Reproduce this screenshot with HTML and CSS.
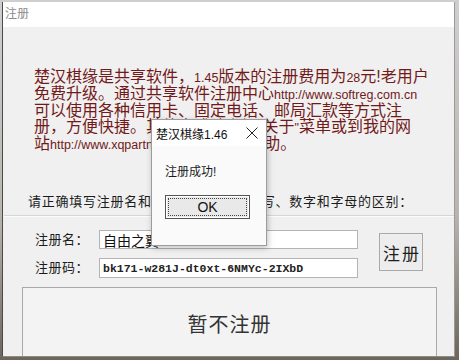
FILE: index.html
```html
<!doctype html>
<html lang="zh-CN">
<head>
    <meta charset="UTF-8">
    <title>注册</title>
    <link rel="stylesheet" href="styles.css">
</head>
<body>
    <div class="screen">
        <div class="win">
            <div class="win-title">注册</div>
            <div class="win-body">
                <div class="notice">
                    <div>楚汉棋缘是共享软件，<span class="lat">1.45</span>版本的注册费用为<span class="lat">28</span>元!老用户</div>
                    <div>免费升级。通过共享软件注册中心<span class="lat">http://www.softreg.com.cn</span></div>
                    <div>可以使用各种信用卡、固定电话、邮局汇款等方式注</div>
                    <div>册，方便快捷。其他方式请参阅<span class="lat">"</span>关于<span class="lat">"</span>菜单或到我的网</div>
                    <div>站<span class="lat">http://www.xqpartner.net</span>获取更多帮助。</div>
                </div>
                <div class="hint">请正确填写注册名和注册码，注意大小写、数字和字母的区别：</div>
                <div class="sep"></div>
                <div class="form">
                    <label class="lbl">注册名：</label>
                    <input class="field" type="text" value="自由之翼" readonly>
                    <label class="lbl">注册码：</label>
                    <input class="field code" type="text" value="bk171-w281J-dt0xt-6NMYc-2IXbD" readonly>
                    <button class="btn reg">注册</button>
                </div>
                <button class="btn later">暂不注册</button>
            </div>
        </div>

        <div class="msgbox">
            <div class="msg-title">
                <span>楚汉棋缘1.46</span>
                <svg class="msg-close" width="12" height="12" viewBox="0 0 12 12">
                    <path d="M0.5 0.5L11.5 11.5M11.5 0.5L0.5 11.5" stroke="#222" stroke-width="1" fill="none"/>
                </svg>
            </div>
            <div class="msg-text">注册成功!</div>
            <button class="ok"><span class="ok-in">OK</span></button>
        </div>
    </div>
</body>
</html>
```

FILE: styles.css
```css
*{
    margin: 0;
    padding: 0;
    box-sizing: border-box;
}
html,body{
    width: 459px;
    height: 360px;
    overflow: hidden;
}
body{
    background: linear-gradient(#cfcfcf, #b9b5ae 60%, #6d655b);
    font-family: "Liberation Sans", "Noto Sans CJK SC", sans-serif;
}
.screen{
    position: relative;
    width: 459px;
    height: 360px;
    padding: 2px 0 0 2px;
}
.win{
    width: 453px;
    height: 355px;
    background: #f0f0f0;
    border-left: 1px solid #4a4a4a;
    border-right: 1px solid #9a9a9a;
    border-bottom: 1px solid #8a8a8a;
    display: flex;
    flex-direction: column;
    overflow: hidden;
}
.win-title{
    height: 25px;
    line-height: 25px;
    background: #fff;
    color: #8c8c8c;
    font-size: 12px;
    padding-left: 2px;
    flex: none;
}
.win-body{
    flex: 1;
    display: flex;
    flex-direction: column;
    align-items: flex-start;
}
.notice{
    margin-top: 42px;
    padding-left: 31px;
    color: #721a1a;
    font-size: 16px;
    line-height: 16px;
    white-space: nowrap;
}
.notice .lat{
    font-size: 12.5px;
}
.hint{
    margin-top: 41px;
    padding-left: 25px;
    font-size: 13px;
    line-height: 16px;
    letter-spacing: .75px;
    color: #1c1c1c;
    white-space: nowrap;
}
.sep{
    align-self: stretch;
    margin: 5px 0 0 1px;
    height: 2px;
    border-top: 1px solid #d6d6d6;
    border-bottom: 1px solid #fcfcfc;
}
.form{
    margin-top: 13px;
    padding-left: 32px;
    display: grid;
    grid-template-columns: 64px 259px 21px 44px;
    grid-template-rows: 19px 20px;
    row-gap: 9px;
}
.lbl{
    grid-column: 1;
    font-size: 13px;
    letter-spacing: .5px;
    line-height: 19px;
    color: #1c1c1c;
}
.field{
    grid-column: 2;
    height: 100%;
    width: 100%;
    border: 1px solid #b4b4b4;
    background: #fff;
    padding: 0 3px;
    font-family: "Noto Sans CJK SC", sans-serif;
    font-size: 14px;
    color: #111;
    outline: none;
}
.field.code{
    font-family: "Liberation Mono", monospace;
    font-size: 11.5px;
    font-weight: bold;
    color: #222;
}
.btn{
    background: #ededed;
    border: 1px solid #a9a9a9;
    font-family: "Noto Sans CJK SC", sans-serif;
    color: #1e1e1e;
    cursor: default;
}
.reg{
    grid-column: 4;
    grid-row: 1 / 3;
    margin-top: 3px;
    height: 38px;
    font-size: 17px;
    letter-spacing: 2px;
    padding-left: 2px;
}
.later{
    margin: 9px 0 0 19px;
    width: 415px;
    height: 73px;
    background: #f3f3f3;
    font-size: 20px;
    letter-spacing: 1px;
    color: #333;
}

/* message box */
.msgbox{
    position: absolute;
    left: 151px;
    top: 119px;
    width: 116px;
    height: 127px;
    background: #fafafa;
    border: 1px solid #9c9c9c;
    box-shadow: 1px 2px 6px rgba(0,0,0,.25);
    font-family: "Liberation Sans", "Noto Sans CJK SC", sans-serif;
}
.msg-title{
    height: 26px;
    display: flex;
    align-items: center;
    justify-content: space-between;
    padding: 0 8px 0 4px;
    background: #fff;
    font-size: 12px;
    color: #111;
}
.msg-close{
    display: block;
}
.msg-text{
    margin: 19px 0 0 13px;
    font-size: 12px;
    line-height: 14px;
    color: #1a1a1a;
}
.ok{
    display: block;
    margin: 16px 0 0 13px;
    width: 85px;
    height: 24px;
    border: 1px solid #555;
    background: #e9e9e9;
    padding: 2px;
    box-shadow: inset 0 0 0 1px #fff;
}
.ok-in{
    display: block;
    height: 100%;
    border: 1px dotted #444;
    font-size: 14px;
    line-height: 16px;
    color: #111;
}
```
